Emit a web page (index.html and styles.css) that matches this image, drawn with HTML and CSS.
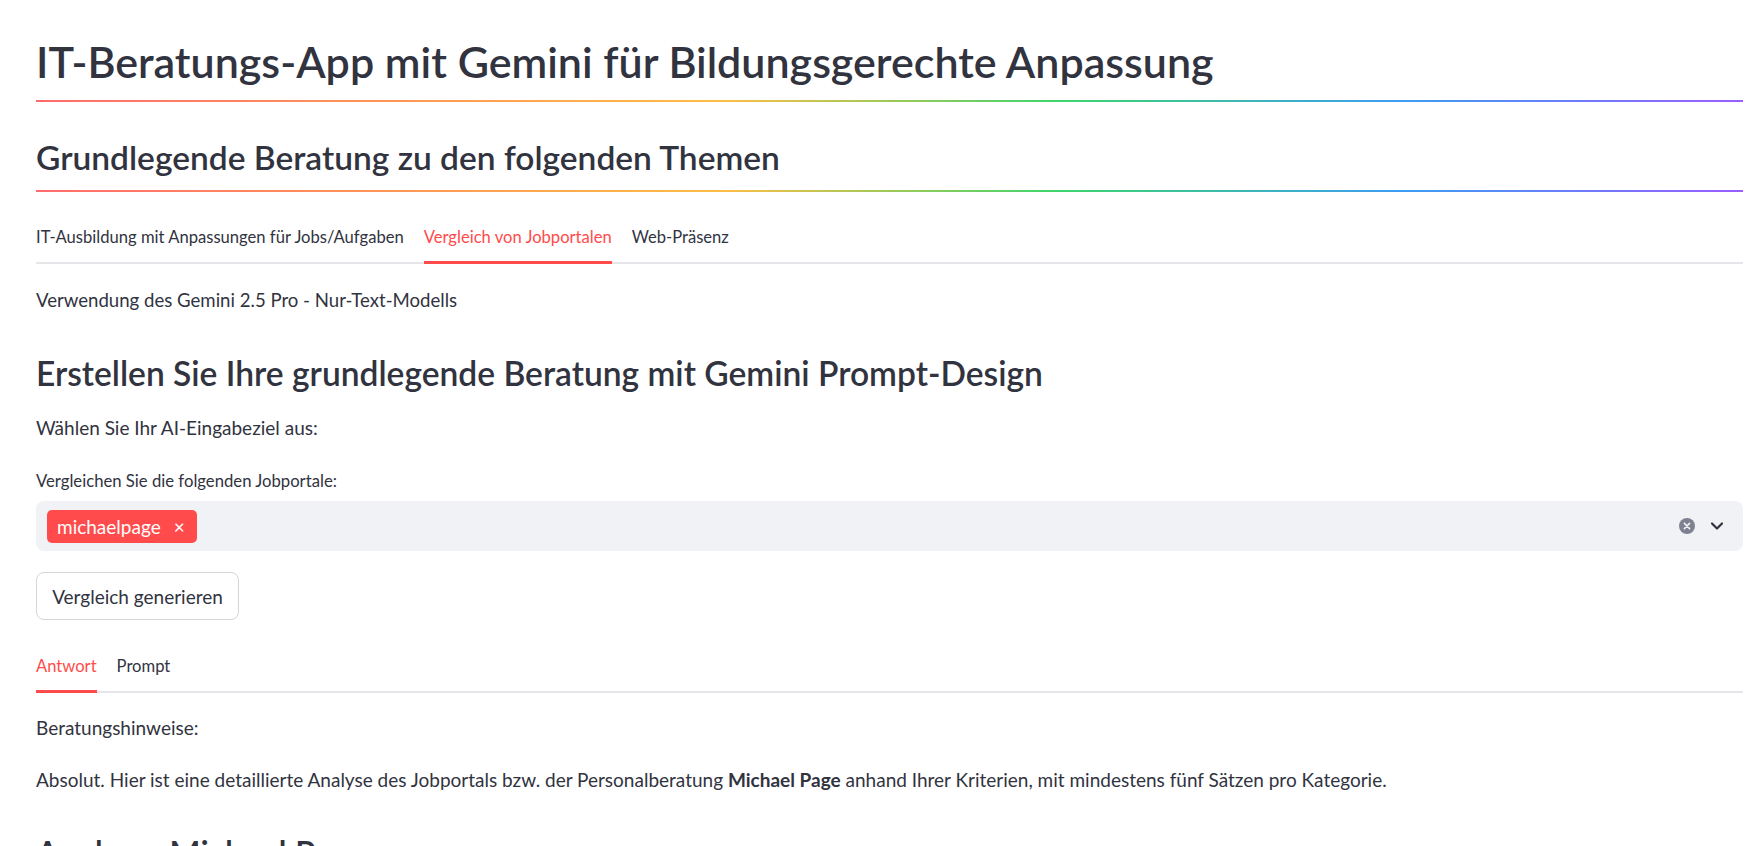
FILE: index.html
```html
<!DOCTYPE html>
<html lang="de">
<head>
<meta charset="utf-8">
<title>IT-Beratungs-App</title>
<link rel="stylesheet" href="styles.css">
</head>
<body>
<main class="main">
  <h1 class="title">IT-Beratungs-App mit Gemini für Bildungsgerechte Anpassung</h1>
  <hr class="rainbow rainbow-1">
  <h2 class="header">Grundlegende Beratung zu den folgenden Themen</h2>
  <hr class="rainbow rainbow-2">

  <div class="tabs tabs-top">
    <span class="tab">IT-Ausbildung mit Anpassungen für Jobs/Aufgaben</span>
    <span class="tab active">Vergleich von Jobportalen</span>
    <span class="tab">Web-Präsenz</span>
  </div>

  <p class="text model">Verwendung des Gemini 2.5 Pro - Nur-Text-Modells</p>
  <h3 class="sub sub-create">Erstellen Sie Ihre grundlegende Beratung mit Gemini Prompt-Design</h3>
  <p class="text choose">Wählen Sie Ihr AI-Eingabeziel aus:</p>

  <label class="label">Vergleichen Sie die folgenden Jobportale:</label>
  <div class="select">
    <span class="tag">michaelpage<span class="tag-x">×</span></span>
    <span class="select-icons">
      <svg class="clear" width="16" height="16" viewBox="0 0 16 16"><circle cx="8" cy="8" r="8" fill="#7f8190"/><path d="M5.4 5.4 10.6 10.6M10.6 5.4 5.4 10.6" stroke="#f0f2f6" stroke-width="1.6" stroke-linecap="round"/></svg>
      <svg class="chev" width="14" height="10" viewBox="0 0 14 10"><path d="M2 2.5 7 7.5 12 2.5" fill="none" stroke="#31333f" stroke-width="2.2" stroke-linecap="round" stroke-linejoin="round"/></svg>
    </span>
  </div>

  <button class="btn">Vergleich generieren</button>

  <div class="tabs tabs-result">
    <span class="tab active">Antwort</span>
    <span class="tab">Prompt</span>
  </div>

  <p class="text hint">Beratungshinweise:</p>
  <p class="text answer">Absolut. Hier ist eine detaillierte Analyse des Jobportals bzw. der Personalberatung <strong>Michael Page</strong> anhand Ihrer Kriterien, mit mindestens fünf Sätzen pro Kategorie.</p>
  <h3 class="sub sub-analyse">Analyse: Michael Page</h3>
</main>
</body>
</html>
```

FILE: styles.css
```css
* { box-sizing: border-box; }

html, body {
  margin: 0;
  padding: 0;
  background: #ffffff;
  overflow: hidden;
}

body {
  font-family: "Source Sans Pro", Lato, "Noto Sans", sans-serif;
  color: #31333f;
  height: 846px;
}

.main {
  padding: 36px 14px 0 36px;
  display: flex;
  flex-direction: column;
  align-items: stretch;
}

.title {
  margin: 0;
  font-size: 43px;
  line-height: 52px;
  font-weight: 600;
  letter-spacing: 0;
}

.rainbow {
  border: none;
  height: 2px;
  margin: 0;
  background: linear-gradient(to right, #ff6c6c, #ffbd45 40%, #3dd56d 60%, #3d9df3 80%, #9a5dff);
}

.rainbow-1 { margin-top: 12px; }

.header {
  margin: 34px 0 0 0;
  font-size: 33.5px;
  line-height: 42px;
  font-weight: 600;
}

.rainbow-2 { margin-top: 12px; }

.tabs {
  display: flex;
  gap: 20px;
  border-bottom: 2px solid #e6e6ea;
}

.tab {
  position: relative;
  font-size: 16.6px;
  line-height: 20px;
  padding-bottom: 15px;
  color: #31333f;
  white-space: nowrap;
}

.tab.active { color: #ff4b4b; }

.tab.active::after {
  content: "";
  position: absolute;
  left: 0;
  right: 0;
  bottom: -2px;
  height: 3px;
  background: #ff4b4b;
}

.tabs-top { margin-top: 35px; }

.text {
  margin: 0;
  font-size: 19px;
  line-height: 28px;
}

.model { margin-top: 22px; font-size: 18.6px; }

.sub {
  margin: 0;
  font-size: 33.55px;
  line-height: 40px;
  font-weight: 600;
}

.sub-create { margin-top: 39px; }

.choose { margin-top: 21px; }

.label {
  display: block;
  margin-top: 29px;
  font-size: 16.7px;
  line-height: 20px;
}

.select {
  margin-top: 10px;
  height: 50px;
  background: #f0f2f6;
  border-radius: 8px;
  display: flex;
  align-items: center;
  justify-content: space-between;
  padding: 0 19px 0 11px;
}

.tag {
  display: inline-flex;
  align-items: center;
  height: 33px;
  padding: 0 12px 0 10px;
  background: #ff4b4b;
  color: #ffffff;
  border-radius: 5px;
  font-size: 19px;
}

.tag-x {
  margin-left: 13px;
  font-size: 19px;
  line-height: 1;
}

.select-icons {
  display: flex;
  align-items: center;
  gap: 15px;
}

.btn {
  align-self: flex-start;
  margin-top: 21px;
  height: 48px;
  width: 203px;
  padding: 0;
  background: #ffffff;
  border: 1px solid #d6d6d9;
  border-radius: 8px;
  font-family: inherit;
  font-size: 19px;
  color: #31333f;
}

.tabs-result { margin-top: 36px; }

.hint { margin-top: 21px; }

.answer { margin-top: 24px; }

.answer strong { font-weight: 700; }

.sub-analyse { margin-top: 39px; }
```
